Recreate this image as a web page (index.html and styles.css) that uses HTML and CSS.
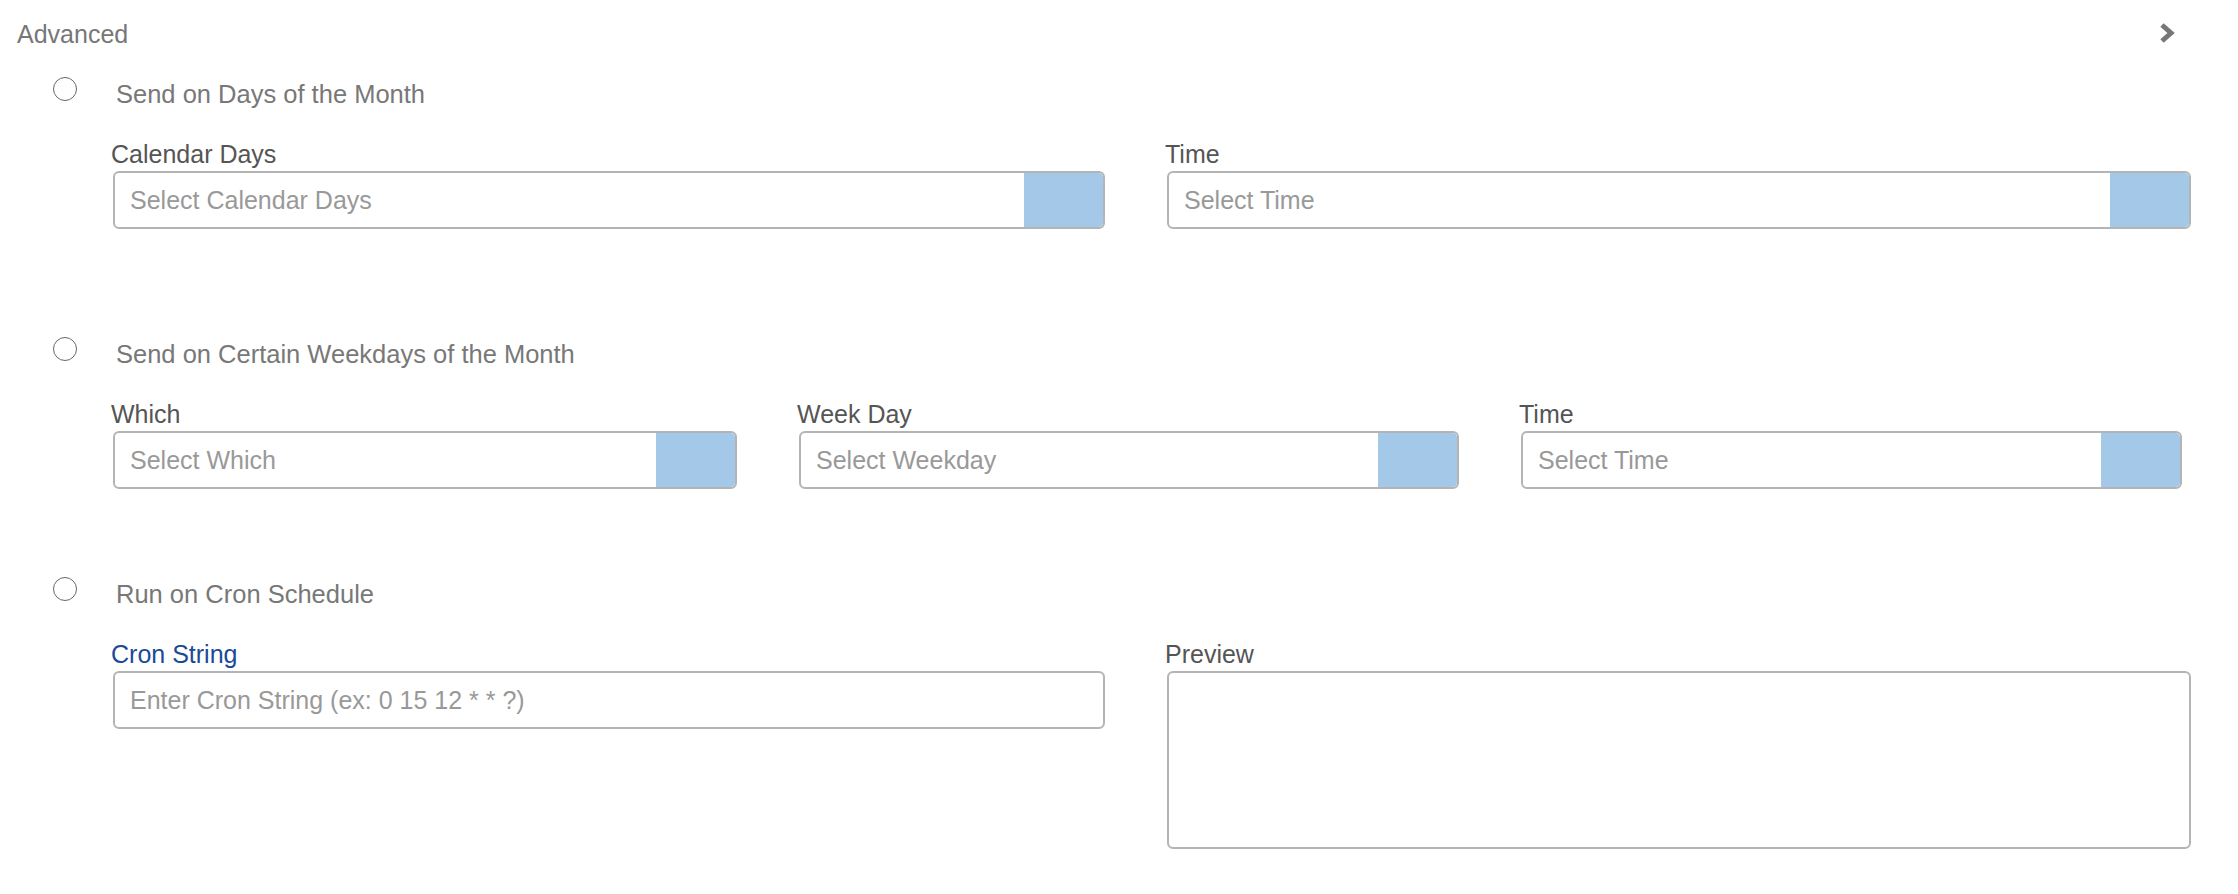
FILE: index.html
```html
<!DOCTYPE html>
<html lang="en">
<head>
<meta charset="utf-8">
<title>Advanced schedule</title>
<link rel="stylesheet" href="styles.css">
</head>
<body>
<div class="panel">
  <div class="panel-header">
    <span class="panel-title">Advanced</span>
    <svg class="chevron" width="16" height="22" viewBox="0 0 16 22" aria-hidden="true">
      <path d="M3 3 L12 11 L3 19" fill="none" stroke="#777" stroke-width="5" stroke-linejoin="miter"/>
    </svg>
  </div>

  <section class="section section-first">
    <div class="option">
      <span class="radio"></span>
      <span class="option-title">Send on Days of the Month</span>
    </div>
    <div class="fields fields-two">
      <div class="field">
        <div class="label">Calendar Days</div>
        <div class="select">
          <span class="placeholder">Select Calendar Days</span>
          <span class="select-btn"></span>
        </div>
      </div>
      <div class="field">
        <div class="label">Time</div>
        <div class="select">
          <span class="placeholder">Select Time</span>
          <span class="select-btn"></span>
        </div>
      </div>
    </div>
  </section>

  <section class="section section-second">
    <div class="option">
      <span class="radio"></span>
      <span class="option-title">Send on Certain Weekdays of the Month</span>
    </div>
    <div class="fields fields-three">
      <div class="field">
        <div class="label">Which</div>
        <div class="select">
          <span class="placeholder">Select Which</span>
          <span class="select-btn"></span>
        </div>
      </div>
      <div class="field">
        <div class="label">Week Day</div>
        <div class="select">
          <span class="placeholder">Select Weekday</span>
          <span class="select-btn"></span>
        </div>
      </div>
      <div class="field">
        <div class="label">Time</div>
        <div class="select">
          <span class="placeholder">Select Time</span>
          <span class="select-btn"></span>
        </div>
      </div>
    </div>
  </section>

  <section class="section section-third">
    <div class="option">
      <span class="radio"></span>
      <span class="option-title">Run on Cron Schedule</span>
    </div>
    <div class="fields fields-two">
      <div class="field">
        <div class="label label-active">Cron String</div>
        <div class="select">
          <span class="placeholder">Enter Cron String (ex: 0 15 12 * * ?)</span>
        </div>
      </div>
      <div class="field">
        <div class="label">Preview</div>
        <div class="preview"></div>
      </div>
    </div>
  </section>
</div>
</body>
</html>
```

FILE: styles.css
```css
html, body {
  margin: 0;
  padding: 0;
  background: #ffffff;
}

body {
  font-family: "Liberation Sans", Arial, sans-serif;
  font-size: 25px;
  line-height: 28px;
  color: #555555;
}

.panel {
  width: 2238px;
  padding-bottom: 40px;
}

.panel-header {
  display: flex;
  align-items: center;
  justify-content: space-between;
  padding: 20px 63px 0 17px;
  height: 28px;
}

.panel-title {
  color: #777777;
}

.chevron {
  display: block;
  margin-top: -2px;
}

.section {
  padding-left: 53px;
  margin-top: 29px;
}

.section-second {
  margin-top: 108px;
}

.section-third {
  margin-top: 88px;
}

.option {
  display: flex;
  align-items: flex-start;
}

.radio {
  width: 24px;
  height: 24px;
  box-sizing: border-box;
  border: 1.5px solid #666666;
  border-radius: 50%;
  background: #ffffff;
  flex: none;
}

.option-title {
  margin-left: 39px;
  margin-top: 3px;
  font-size: 25.5px;
  color: #787878;
}

.fields {
  display: grid;
  column-gap: 62px;
  margin-left: 60px;
  margin-top: 32px;
}

.fields-two {
  grid-template-columns: 992fr 1024fr;
  margin-right: 47px;
}

.fields-three {
  grid-template-columns: 624fr 660fr 661fr;
  margin-right: 56px;
}

.label {
  color: #555555;
  margin-left: -2px;
}

.label-active {
  color: #1a4a98;
}

.select {
  margin-top: 3px;
  height: 58px;
  box-sizing: border-box;
  border: 2px solid #b4b4b4;
  border-radius: 6px;
  display: flex;
  align-items: center;
  overflow: hidden;
}

.placeholder {
  flex: 1;
  padding-left: 15px;
  color: #999999;
  white-space: nowrap;
}

.select-btn {
  align-self: stretch;
  width: 79px;
  background: #a4c9e8;
  border-radius: 0 4px 4px 0;
}

.preview {
  margin-top: 3px;
  height: 178px;
  box-sizing: border-box;
  border: 2px solid #b4b4b4;
  border-radius: 6px;
}
```
